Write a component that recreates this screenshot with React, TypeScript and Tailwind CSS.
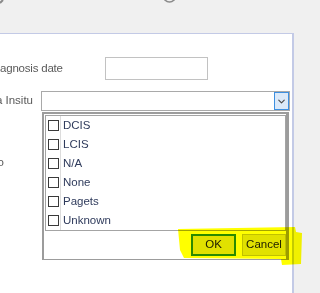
import { ChevronDown } from "lucide-react";

const options = ["DCIS", "LCIS", "N/A", "None", "Pagets", "Unknown"];

function Checkbox() {
  return <span className="block h-[11px] w-[11px] border border-[#3a3a3a] bg-white" />;
}

export default function App() {
  return (
    <div
      className="relative flex h-[293px] w-[320px] flex-col overflow-hidden bg-[#f0f0f0]"
      style={{ fontFamily: '"Liberation Sans", Arial, sans-serif' }}
    >
      {/* Strip above the panel */}
      <div className="relative h-[33px] shrink-0">
        <svg className="absolute left-0 top-0" width="320" height="33">
          <path d="M0 3 L3 0" stroke="#8a8a8a" strokeWidth="2" />
          <circle cx="169.5" cy="-4" r="6" fill="none" stroke="#8a8a8a" strokeWidth="1.6" />
        </svg>
      </div>

      {/* Panel */}
      <div className="relative w-[294px] flex-1 border-r-2 border-t border-[#c3cae6] bg-white">
        <div className="mt-[23px] flex h-[23px] items-center">
          <div className="w-[61px] whitespace-nowrap text-[11.5px] tracking-[-0.2px] text-[#5a5a5a]">
            agnosis date
          </div>
          <div className="ml-[44px] h-[23px] w-[103px] border border-[#c2c2c2] bg-white" />
        </div>

        <div className="mt-[11px] flex h-[20px] items-center">
          <div className="flex w-[33px] justify-end overflow-hidden whitespace-nowrap text-[11.5px] text-[#5a5a5a]">
            Carcinoma Insitu
          </div>
          <div className="ml-[8px] flex h-[20px] w-[249px] justify-end border border-[#a9a9a9] bg-white">
            <div className="flex w-[15px] items-center justify-center border border-[#3d8fe0] bg-[#dbe9f9]">
              <ChevronDown size={11} strokeWidth={2.5} className="text-[#4a4a4a]" />
            </div>
          </div>
        </div>

        <div className="mt-[45px] flex h-[14px] items-center">
          <div className="flex w-[4px] justify-end overflow-hidden whitespace-nowrap text-[11.5px] text-[#5a5a5a]">
            Info
          </div>
        </div>

        {/* Open dropdown */}
        <div className="absolute left-[42px] top-[78px] flex w-[247px] flex-col border-b border-l-2 border-r-[3px] border-t-2 border-[#9c9c9c] bg-white">
          <div className="ml-[1px] mt-[1px] flex flex-col border border-[#a4a4a4]">
            {options.map((o) => (
              <div key={o} className="flex h-[19px] items-stretch">
                <div className="flex w-[15px] items-center border-r border-[#dcdcdc] pl-[2px]">
                  <Checkbox />
                </div>
                <span className="flex items-center pl-[2px] text-[11.5px] text-[#2f3b5c]">{o}</span>
              </div>
            ))}
          </div>
          <div className="flex h-[28px] justify-end gap-[6px] pt-[3px]">
            <button className="flex h-[22px] w-[45px] items-center justify-center border-2 border-[#2a8a2a] bg-[#e1e1e1] text-[11.5px] text-[#202020]">
              OK
            </button>
            <button className="flex h-[22px] w-[44px] items-center justify-center border border-[#c0c0c0] bg-[#e1e1e1] text-[11.5px] text-[#202020]">
              Cancel
            </button>
          </div>
        </div>
      </div>

      {/* Marker highlight */}
      <svg className="pointer-events-none absolute left-0 top-0 mix-blend-multiply" width="320" height="293">
        <path
          d="M178 229 L295 227 L296 232 L302 233 L301 264 L282 265 L281 259 L184 258 L180 250 Z"
          fill="#ffff00"
        />
      </svg>
    </div>
  );
}
